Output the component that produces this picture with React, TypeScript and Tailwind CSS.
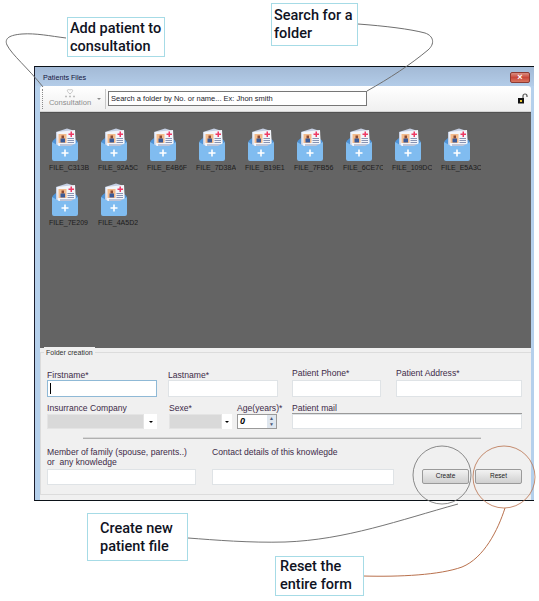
import type { ReactNode } from "react";

const files = [
  "FILE_C313B",
  "FILE_92A5C",
  "FILE_E4B6F",
  "FILE_7D38A",
  "FILE_B19E1",
  "FILE_7FB56",
  "FILE_6CE7C",
  "FILE_109DC",
  "FILE_E5A3C",
  "FILE_7E209",
  "FILE_4A5D2",
];

function FolderIcon() {
  return (
    <svg width="26" height="33" viewBox="0 0 26 33">
      <path d="M4 4 L15 0.5 L23 3 L23 20 L4 20 Z" fill="#c6d0e4" />
      <path d="M0.5 13 L4 10 L4 20 L0.5 20 Z" fill="#4f94d8" />
      <path d="M25.5 13 L22 10 L22 20 L25.5 20 Z" fill="#4f94d8" />
      <path d="M5 4 L23 2 L24 21 L6 23 Z" fill="#f3f5fa" />
      <rect x="6.5" y="6" width="8" height="9" fill="#f3bb8c" />
      <rect x="9.5" y="7.5" width="2.5" height="3" fill="#8a4a34" />
      <rect x="8.5" y="10.5" width="4.5" height="4" fill="#3a5a98" />
      <path d="M18.5 3.5 H20 V5.5 H22 V7 H20 V9 H18.5 V7 H16.5 V5.5 H18.5 Z" fill="#ee3a64" />
      <path d="M15.5 10.5 H22 M15.5 12.5 H22 M15.5 14.5 H22 M8 17 H22" stroke="#8894b4" strokeWidth="1" />
      <path d="M0 14 L7 18 L19 18 L26 14 L26 31 Q26 33 24 33 L2 33 Q0 33 0 31 Z" fill="#80bcf0" />
      <path d="M12.2 21.5 H13.8 V24.2 H16.5 V25.8 H13.8 V28.5 H12.2 V25.8 H9.5 V24.2 H12.2 Z" fill="#ffffff" />
    </svg>
  );
}

function FileItem({ name }: { name: string }) {
  return (
    <div className="flex h-[55px] w-[49px] flex-col overflow-hidden">
      <div className="ml-[4px] h-[33px] w-[26px]">
        <FolderIcon />
      </div>
      <div className="mt-[1px] w-[41px] overflow-hidden whitespace-nowrap pl-[1px] text-[7px] leading-[11px] text-[#1c1c1c]">
        {name}
      </div>
    </div>
  );
}

function Field({
  label,
  className,
  labelClass = "",
  children,
}: {
  label: ReactNode;
  className: string;
  labelClass?: string;
  children: ReactNode;
}) {
  return (
    <div className={`flex shrink-0 flex-col ${className}`}>
      <div className={`whitespace-nowrap text-[8.6px] leading-[10px] text-[#3d2b48] ${labelClass}`}>{label}</div>
      {children}
    </div>
  );
}

function TextBox({ h = "h-[17px]", focused = false }: { h?: string; focused?: boolean }) {
  return (
    <div
      className={`relative w-full border bg-white ${h} ${focused ? "border-[#8fb9d6]" : "border-[#dfe3e6]"}`}
    >
      {focused && <div className="absolute left-[2px] top-[2px] h-[11px] w-px bg-black" />}
    </div>
  );
}

function ComboBox({ grey }: { grey: string }) {
  return (
    <div className="flex h-[15px] w-full bg-white">
      <div className={`h-full ${grey} border border-[#e4e4e4] bg-[#d9d9d9]`} />
      <div className="flex flex-1 items-center justify-center">
        <div className="h-0 w-0 border-x-[2px] border-t-[2px] border-x-transparent border-t-black" />
      </div>
    </div>
  );
}

function Callout({ className, children }: { className: string; children: ReactNode }) {
  return (
    <div
      className={`absolute whitespace-nowrap border border-[#a6dbe6] bg-white text-[14.5px] font-medium leading-[18px] text-[#10131f] [font-family:Roboto,sans-serif] ${className}`}
    >
      {children}
    </div>
  );
}

export default function App() {
  return (
    <div className="relative h-[601px] w-[539px] overflow-hidden bg-white [font-family:'Liberation_Sans',sans-serif]">
      <div className="ml-[34px] w-[500px] pt-[66px]">
        <div className="flex h-[435px] flex-col border-y border-l border-y-[#0b1218] border-l-[#1a1c2c] bg-[#b5d0ec]">
          <div className="flex h-[19px] shrink-0 items-center justify-between bg-gradient-to-b from-[#a3bad6] to-[#b3cce8] pl-[8px] pr-[4px] pt-[2px]">
            <span className="text-[7.2px] leading-[10px] text-[#14143c]">Patients Files</span>
            <button className="flex h-[11px] w-[20px] items-center justify-center rounded-[2px] border border-[#8c3a32] bg-gradient-to-b from-[#d98c80] via-[#c9473a] to-[#d8745f] text-[9px] font-bold leading-none text-white">
              ×
            </button>
          </div>
          <div className="ml-[5px] mr-[3px] flex min-h-0 flex-1 flex-col">
            <div className="flex h-[26px] shrink-0 items-center rounded-t-[3px] border-b border-[#d4d4d4] bg-gradient-to-b from-white to-[#f0f0f0] pl-[2px] pr-[3px]">
              <div className="h-[20px] w-px border-l border-dotted border-[#8a8a8a]" />
              <div className="mb-[1px] ml-[5px] flex w-[44px] flex-col items-center">
                <svg width="14" height="10" viewBox="0 0 14 10" fill="none">
                  <path d="M7 6 C3 3 4 0.5 7 2 C10 0.5 11 3 7 6 Z" stroke="#c4c4c4" strokeWidth="1" />
                  <path d="M2 8.5 H4 M6 8.5 H8 M10 8.5 H12" stroke="#bdbdbd" strokeWidth="1.5" />
                </svg>
                <span className="text-[7.6px] leading-[10px] text-[#8d8d8d]">Consultation</span>
              </div>
              <div className="ml-[5px] h-0 w-0 border-x-[2px] border-t-[2px] border-x-transparent border-t-[#8d8d8d]" />
              <div className="ml-[4px] h-[20px] w-px bg-[#c8c8c8]" />
              <input
                readOnly
                value="Search a folder by No. or name... Ex: Jhon smith"
                className="ml-[2px] h-[15px] w-[259px] border border-[#777777] bg-white px-[2px] text-[7.5px] text-[#1c1c2c] outline-none"
              />
              <svg className="ml-auto" width="11" height="11" viewBox="0 0 11 11" fill="none">
                <path d="M6 5 V3 A2 2 0 0 1 10 3 V4" stroke="#555555" strokeWidth="1.2" />
                <rect x="1" y="5" width="6" height="5.5" fill="#111111" />
                <rect x="3" y="7" width="2" height="2" fill="#e7c531" />
              </svg>
            </div>
            <div className="h-[236px] shrink-0 border-t border-[#525252] bg-[#646464] pl-[8px] pt-[15px]">
              <div className="grid grid-cols-[repeat(9,49px)]">
                {files.map((name) => (
                  <FileItem key={name} name={name} />
                ))}
              </div>
            </div>
            <div className="min-h-0 flex-1 bg-[#f0f0f0] pt-[4px]">
              <div className="relative h-[143px] border-y border-l border-[#dcdcdc] pl-[6px] pr-[7px] pt-[15px]">
                <div className="absolute left-[3px] top-[-6px] bg-[#f0f0f0] px-[2px] text-[7px] leading-[11px] text-[#333333]">
                  Folder creation
                </div>
                <div className="flex items-end">
                  <Field label="Firstname*" className="w-[110px]">
                    <TextBox focused />
                  </Field>
                  <Field label="Lastname*" className="ml-[11px] w-[110px]">
                    <TextBox />
                  </Field>
                  <Field label="Patient Phone*" className="ml-[14px] w-[89px]" labelClass="mb-[2px]">
                    <TextBox />
                  </Field>
                  <Field label="Patient Address*" className="ml-[15px] w-[126px]" labelClass="mb-[2px]">
                    <TextBox />
                  </Field>
                </div>
                <div className="mt-[6px] flex items-end">
                  <Field label="Insurrance Company" className="w-[110px]" labelClass="mb-[1px]">
                    <ComboBox grey="w-[97px]" />
                  </Field>
                  <Field label="Sexe*" className="ml-[12px] w-[63px]" labelClass="mb-[1px]">
                    <ComboBox grey="w-[53px]" />
                  </Field>
                  <Field label="Age(years)*" className="ml-[5px] w-[40px]" labelClass="mb-[1px]">
                    <div className="flex h-[15px] w-full items-center border border-[#9a9a9a] bg-white pl-[2px]">
                      <span className="flex-1 text-[9px] font-bold italic leading-none text-black">0</span>
                      <div className="flex h-full w-[9px] flex-col bg-[#dfe6ee] text-center text-[5px] leading-[6px] text-[#4a5a7a]">
                        <span>▲</span>
                        <span>▼</span>
                      </div>
                    </div>
                  </Field>
                  <Field label="Patient mail" className="ml-[15px] w-[230px]">
                    <div className="h-px bg-[#9a9a9a]" />
                    <TextBox h="h-[15px]" />
                  </Field>
                </div>
                <div className="ml-[36px] mt-[8px] h-[2px] w-[398px] border-b border-[#b0b0b0] bg-[#d8d8d8]" />
                <div className="mt-[8px] flex items-end">
                  <Field
                    label={
                      <>
                        Member of family (spouse, parents..)
                        <br />
                        or&nbsp; any knowledge
                      </>
                    }
                    className="w-[149px]"
                    labelClass="mb-[2px]"
                  >
                    <TextBox h="h-[16px]" />
                  </Field>
                  <Field label="Contact details of this knowlegde" className="ml-[16px] w-[182px]" labelClass="mb-[12px]">
                    <TextBox h="h-[16px]" />
                  </Field>
                  <button className="mb-px ml-[28px] h-[15px] w-[47px] rounded-[2px] border border-[#9a9a9a] bg-gradient-to-b from-[#f2f2f2] to-[#d0d0d0] text-[6.5px] leading-none text-[#222222]">
                    Create
                  </button>
                  <button className="mb-px ml-[6px] h-[15px] w-[47px] rounded-[2px] border border-[#9a9a9a] bg-gradient-to-b from-[#f2f2f2] to-[#d0d0d0] text-[6.5px] leading-none text-[#222222]">
                    Reset
                  </button>
                </div>
              </div>
            </div>
          </div>
        </div>
      </div>

      <svg className="pointer-events-none absolute inset-0" width="539" height="601" viewBox="0 0 539 601" fill="none">
        <path d="M66 38 C50 36 36 33 22 34 C10 35 4 38 7 45 C12 55 28 68 43 87" stroke="#6f6f6f" strokeWidth="1" />
        <path d="M358 24 C385 26 410 29 425 33 C434 36 435 44 428 50 C410 65 390 78 367 91" stroke="#6f6f6f" strokeWidth="1" />
        <path d="M188 538 C215 540 250 543 285 542 C345 540 400 520 458 504" stroke="#757575" strokeWidth="1" />
        <path d="M363 576 C400 577 440 575 462 567 C484 558 498 530 505 508" stroke="#b9714d" strokeWidth="1" />
        <circle cx="442" cy="475" r="29" stroke="#6f6f6f" strokeWidth="0.8" />
        <circle cx="504" cy="477" r="31" stroke="#b9714d" strokeWidth="0.8" />
      </svg>

      <Callout className="left-[67px] top-[17px] h-[40px] w-[98px] pl-[2px] pt-[2px]">
        Add patient to
        <br />
        consultation
      </Callout>
      <Callout className="left-[271px] top-[3px] h-[43px] w-[87px] pl-[2px] pt-[3px]">
        Search for a
        <br />
        folder
      </Callout>
      <Callout className="left-[87px] top-[513px] h-[48px] w-[101px] pl-[12px] pt-[6px]">
        Create new
        <br />
        patient file
      </Callout>
      <Callout className="left-[275px] top-[556px] h-[40px] w-[89px] pl-[4px] pt-[1px]">
        Reset the
        <br />
        entire form
      </Callout>
    </div>
  );
}
